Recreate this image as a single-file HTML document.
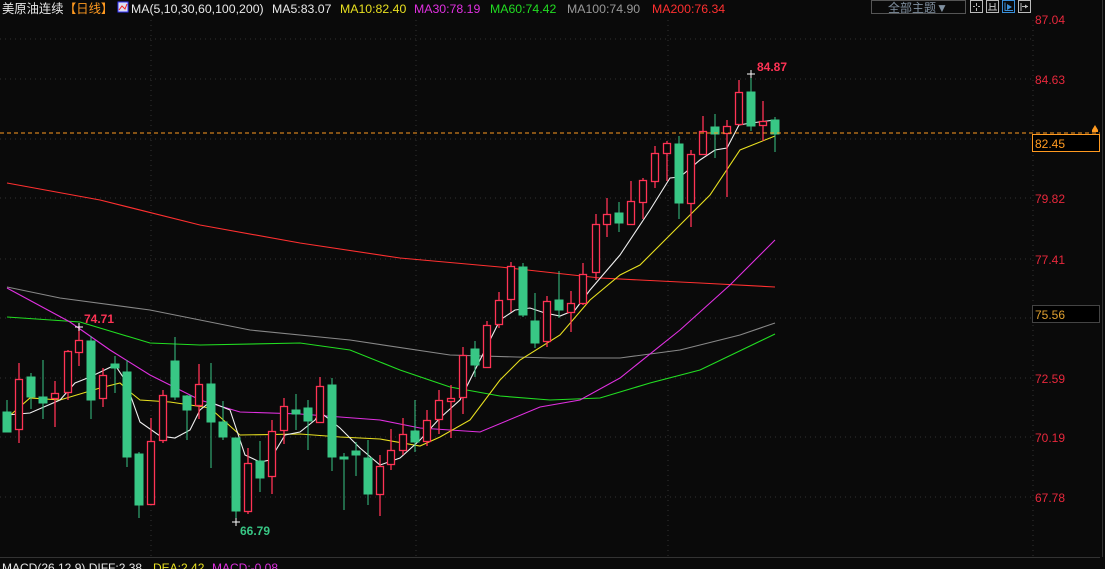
<!DOCTYPE html>
<html><head><meta charset="utf-8"><style>
html,body{margin:0;padding:0;background:#0a0a0a;width:1105px;height:569px;overflow:hidden;font-family:"Liberation Sans","Noto Sans CJK SC",sans-serif}
svg{position:absolute;left:0;top:0}
</style></head><body>
<svg width="1105" height="569" viewBox="0 0 1105 569" xmlns="http://www.w3.org/2000/svg" font-family="Liberation Sans, Noto Sans CJK SC, sans-serif">
<rect width="1105" height="569" fill="#0a0a0a"/>
<!-- grid -->
<g stroke="#333" stroke-dasharray="1,4" stroke-width="1" shape-rendering="crispEdges">
<line x1="0" y1="39" x2="1032" y2="39"/>
<line x1="0" y1="79" x2="1032" y2="79"/>
<line x1="0" y1="139" x2="1032" y2="139"/>
<line x1="0" y1="198" x2="1032" y2="198"/>
<line x1="0" y1="259" x2="1032" y2="259"/>
<line x1="0" y1="318" x2="1032" y2="318"/>
<line x1="0" y1="378" x2="1032" y2="378"/>
<line x1="0" y1="437" x2="1032" y2="437"/>
<line x1="0" y1="497" x2="1032" y2="497"/>
<line x1="151" y1="20" x2="151" y2="557"/>
<line x1="416" y1="20" x2="416" y2="557"/>
<line x1="668" y1="20" x2="668" y2="557"/>
<line x1="1033" y1="20" x2="1033" y2="557"/>
</g>
<line x1="0" y1="557.5" x2="1100" y2="557.5" stroke="#333"/>
<line x1="1102.5" y1="0" x2="1102.5" y2="557" stroke="#333"/>
<!-- MA lines -->
<g fill="none" stroke-width="1.1">
<polyline stroke="#ff3030" points="7,183 100,200 200,225 300,243 400,258 500,267 600,278 700,283 775,287"/>
<polyline stroke="#888" points="7,287 60,298 150,310 250,330 350,340 450,355 550,358 620,358 680,350 740,335 775,323"/>
<polyline stroke="#22dd22" points="7,317 80,322 150,343 200,345 300,343 350,350 400,370 450,387 500,396 550,400 600,398 650,383 700,370 775,334"/>
<polyline stroke="#e030e0" points="7,288 70,322 110,350 150,375 200,400 240,412 300,414 380,420 420,428 480,432 540,407 580,400 620,378 680,330 730,285 775,240"/>
<polyline stroke="#e8e020" points="7,418 30,398 60,400 100,388 120,383 130,392 140,400 170,402 210,408 240,435 300,434 340,437 380,439 420,446 440,437 470,420 500,380 520,360 560,335 590,300 620,275 640,265 680,225 710,195 740,150 775,136"/>
<polyline stroke="#f0f0f0" points="7,415 30,413 60,400 75,383 90,377 115,365 125,380 140,422 160,436 175,438 190,430 200,410 210,402 230,410 245,455 260,462 270,460 285,435 300,432 315,420 320,412 340,428 360,448 380,465 400,458 420,440 440,418 460,400 480,360 500,320 515,310 530,308 545,313 560,316 575,310 590,290 620,255 650,210 670,178 680,177 700,160 715,150 727,148 739,125 751,123 775,120"/>
</g>
<!-- green candles -->
<g fill="#38c785" stroke="#38c785" stroke-width="1">
<line x1="7" y1="400" x2="7" y2="432"/><rect x="3" y="412" width="8" height="20"/>
<line x1="31" y1="373" x2="31" y2="409"/><rect x="27" y="377" width="8" height="20"/>
<line x1="43" y1="360" x2="43" y2="419"/><rect x="39" y="397" width="8" height="6"/>
<line x1="91" y1="336" x2="91" y2="419"/><rect x="87" y="341" width="8" height="59"/>
<line x1="115" y1="356" x2="115" y2="393"/><rect x="111" y="364" width="8" height="4"/>
<line x1="127" y1="360" x2="127" y2="467"/><rect x="123" y="372" width="8" height="85"/>
<line x1="139" y1="452" x2="139" y2="518"/><rect x="135" y="454" width="8" height="51"/>
<line x1="175" y1="337" x2="175" y2="400"/><rect x="171" y="361" width="8" height="36"/>
<line x1="187" y1="395" x2="187" y2="440"/><rect x="183" y="396" width="8" height="14"/>
<line x1="211" y1="363" x2="211" y2="468"/><rect x="207" y="384" width="8" height="38"/>
<line x1="223" y1="401" x2="223" y2="440"/><rect x="219" y="422" width="8" height="15"/>
<line x1="236" y1="438" x2="236" y2="522"/><rect x="232" y="438" width="8" height="73"/>
<line x1="260" y1="441" x2="260" y2="492"/><rect x="256" y="461" width="8" height="17"/>
<line x1="296" y1="394" x2="296" y2="430"/><rect x="292" y="410" width="8" height="4"/>
<line x1="308" y1="400" x2="308" y2="450"/><rect x="304" y="408" width="8" height="13"/>
<line x1="332" y1="378" x2="332" y2="471"/><rect x="328" y="385" width="8" height="72"/>
<line x1="344" y1="453" x2="344" y2="510"/><rect x="340" y="457" width="8" height="2"/>
<line x1="356" y1="442" x2="356" y2="476"/><rect x="352" y="451" width="8" height="4"/>
<line x1="368" y1="440" x2="368" y2="505"/><rect x="364" y="458" width="8" height="36"/>
<line x1="415" y1="400" x2="415" y2="452"/><rect x="411" y="431" width="8" height="11"/>
<line x1="475" y1="341" x2="475" y2="377"/><rect x="471" y="349" width="8" height="16"/>
<line x1="523" y1="263" x2="523" y2="317"/><rect x="519" y="267" width="8" height="48"/>
<line x1="535" y1="293" x2="535" y2="348"/><rect x="531" y="321" width="8" height="22"/>
<line x1="559" y1="271" x2="559" y2="318"/><rect x="555" y="300" width="8" height="10"/>
<line x1="619" y1="202" x2="619" y2="232"/><rect x="615" y="213" width="8" height="10"/>
<line x1="679" y1="136" x2="679" y2="219"/><rect x="675" y="144" width="8" height="59"/>
<line x1="715" y1="114" x2="715" y2="158"/><rect x="711" y="127" width="8" height="7"/>
<line x1="751" y1="74" x2="751" y2="131"/><rect x="747" y="92" width="8" height="34"/>
<line x1="775" y1="117" x2="775" y2="152"/><rect x="771" y="120" width="8" height="14"/>
</g>
<!-- red candles -->
<g fill="#0a0a0a" stroke="#ff3355" stroke-width="1.3">
<line x1="19" y1="363" x2="19" y2="443"/><rect x="15.5" y="379.5" width="7" height="50"/>
<line x1="55" y1="381" x2="55" y2="427"/><rect x="51.5" y="393.5" width="7" height="5"/>
<line x1="68" y1="350" x2="68" y2="400"/><rect x="64.5" y="351.5" width="7" height="41"/>
<line x1="79" y1="327" x2="79" y2="366"/><rect x="75.5" y="340.5" width="7" height="12"/>
<line x1="103" y1="368" x2="103" y2="407"/><rect x="99.5" y="375.5" width="7" height="23"/>
<line x1="151" y1="418" x2="151" y2="505"/><rect x="147.5" y="441.5" width="7" height="63"/>
<line x1="163" y1="390" x2="163" y2="443"/><rect x="159.5" y="395.5" width="7" height="45"/>
<line x1="199" y1="364" x2="199" y2="419"/><rect x="195.5" y="384.5" width="7" height="21"/>
<line x1="248" y1="448" x2="248" y2="514"/><rect x="244.5" y="463.5" width="7" height="48"/>
<line x1="272" y1="420" x2="272" y2="494"/><rect x="268.5" y="431.5" width="7" height="45"/>
<line x1="284" y1="398" x2="284" y2="444"/><rect x="280.5" y="406.5" width="7" height="24"/>
<line x1="320" y1="377" x2="320" y2="423"/><rect x="316.5" y="386.5" width="7" height="36"/>
<line x1="380" y1="455" x2="380" y2="516"/><rect x="376.5" y="466.5" width="7" height="28"/>
<line x1="391" y1="429" x2="391" y2="470"/><rect x="387.5" y="450.5" width="7" height="14"/>
<line x1="403" y1="418" x2="403" y2="455"/><rect x="399.5" y="434.5" width="7" height="16"/>
<line x1="427" y1="410" x2="427" y2="446"/><rect x="423.5" y="420.5" width="7" height="21"/>
<line x1="439" y1="390" x2="439" y2="434"/><rect x="435.5" y="400.5" width="7" height="19"/>
<line x1="451" y1="385" x2="451" y2="438"/><rect x="447.5" y="398.5" width="7" height="3"/>
<line x1="463" y1="347" x2="463" y2="414"/><rect x="459.5" y="355.5" width="7" height="42"/>
<line x1="487" y1="321" x2="487" y2="367"/><rect x="483.5" y="325.5" width="7" height="42"/>
<line x1="499" y1="292" x2="499" y2="328"/><rect x="495.5" y="300.5" width="7" height="24"/>
<line x1="511" y1="262" x2="511" y2="312"/><rect x="507.5" y="266.5" width="7" height="33"/>
<line x1="547" y1="296" x2="547" y2="347"/><rect x="543.5" y="301.5" width="7" height="40"/>
<line x1="571" y1="291" x2="571" y2="332"/><rect x="567.5" y="303.5" width="7" height="9"/>
<line x1="583" y1="263" x2="583" y2="305"/><rect x="579.5" y="274.5" width="7" height="29"/>
<line x1="596" y1="214" x2="596" y2="280"/><rect x="592.5" y="224.5" width="7" height="48"/>
<line x1="607" y1="198" x2="607" y2="237"/><rect x="603.5" y="214.5" width="7" height="10"/>
<line x1="631" y1="181" x2="631" y2="224"/><rect x="627.5" y="201.5" width="7" height="23"/>
<line x1="643" y1="178" x2="643" y2="219"/><rect x="639.5" y="180.5" width="7" height="22"/>
<line x1="655" y1="146" x2="655" y2="188"/><rect x="651.5" y="153.5" width="7" height="28"/>
<line x1="667" y1="141" x2="667" y2="181"/><rect x="663.5" y="143.5" width="7" height="10"/>
<line x1="691" y1="150" x2="691" y2="227"/><rect x="687.5" y="154.5" width="7" height="49"/>
<line x1="703" y1="116" x2="703" y2="154"/><rect x="699.5" y="131.5" width="7" height="23"/>
<line x1="727" y1="120" x2="727" y2="197"/><rect x="723.5" y="126.5" width="7" height="7"/>
<line x1="739" y1="80" x2="739" y2="124"/><rect x="735.5" y="92.5" width="7" height="32"/>
<line x1="763" y1="101" x2="763" y2="141"/><rect x="759.5" y="121.5" width="7" height="4"/>
</g>
<!-- current price dashed -->
<line x1="0" y1="133" x2="1100" y2="133" stroke="#ff9a20" stroke-width="1.2" stroke-dasharray="4,3" shape-rendering="crispEdges"/>
<!-- markers -->
<g stroke="#fff" stroke-width="1"><line x1="747" y1="74" x2="755" y2="74"/><line x1="751" y1="70" x2="751" y2="78"/>
<line x1="75" y1="327" x2="83" y2="327"/><line x1="79" y1="323" x2="79" y2="331"/>
<line x1="232" y1="522" x2="240" y2="522"/><line x1="236" y1="518" x2="236" y2="526"/></g>
<g font-size="12" font-weight="bold">
<text x="757" y="71" fill="#ff3355">84.87</text>
<text x="84" y="323" fill="#ff3355">74.71</text>
<text x="240" y="535" fill="#38c785">66.79</text>
</g>
<!-- axis -->
<g font-size="12" fill="#e8283c">
<text x="1035" y="24">87.04</text>
<text x="1035" y="84">84.63</text>
<text x="1035" y="203">79.82</text>
<text x="1035" y="264">77.41</text>
<text x="1035" y="383">72.59</text>
<text x="1035" y="442">70.19</text>
<text x="1035" y="502">67.78</text>
</g>
<rect x="1032.5" y="134.5" width="67" height="17" fill="#000" stroke="#ff9a20"/>
<text x="1035" y="148" font-size="12" fill="#ff9a20">82.45</text>
<rect x="1032.5" y="305.5" width="67" height="17" fill="#000" stroke="#444"/>
<text x="1035" y="319" font-size="12" fill="#e0a030">75.56</text>
<polygon points="1092,130 1095,125 1098,130" fill="#ff9a20"/><rect x="1092" y="130" width="6" height="2" fill="#ff9a20"/>
<!-- header -->
<g font-size="12.3">
<text x="2" y="13" fill="#e8e8e8">美原油连续</text>
<text x="64" y="13" fill="#ff9a20">【日线】</text>
<rect x="118" y="2" width="10" height="10" fill="#dde" stroke="#33f"/>
<polyline points="119,10 122,6 125,9 127,4" stroke="#e22" fill="none"/>
<text x="131" y="13" fill="#e8e8e8">MA(5,10,30,60,100,200)</text>
<text x="272" y="13" fill="#e8e8e8">MA5:83.07</text>
<text x="340" y="13" fill="#e8e020">MA10:82.40</text>
<text x="414" y="13" fill="#e030e0">MA30:78.19</text>
<text x="490" y="13" fill="#22dd22">MA60:74.42</text>
<text x="567" y="13" fill="#999">MA100:74.90</text>
<text x="652" y="13" fill="#ff3030">MA200:76.34</text>
</g>
<rect x="871.5" y="0.5" width="94" height="13" fill="#0a0a0a" stroke="#555"/>
<text x="888" y="12" font-size="12" fill="#8090a0">全部主题▼</text>
<g fill="none" stroke="#bbb">
<rect x="970.5" y="0.5" width="12" height="12"/><rect x="986.5" y="0.5" width="12" height="12"/>
<rect x="1002.5" y="0.5" width="12" height="12" stroke="#3a8fd8"/><rect x="1018.5" y="0.5" width="12" height="12"/>
<path d="M976.5 3v3M976.5 8v3M973 6.5h2M978 6.5h2"/>
<path d="M990 3v7M995 3v7M990 6.5h5M988 10h9"/>
<path d="M1005 2.5v8h8" stroke="#3a8fd8"/><polygon points="1007,4 1012,7 1007,10" fill="#3a8fd8" stroke="none"/>
<path d="M1021 3v8M1022 6.5h6"/><polygon points="1025,4.5 1028,6.5 1025,8.5" fill="#bbb" stroke="none"/>
</g>
<!-- macd line -->
<text x="2" y="572" font-size="12" fill="#e8e8e8">MACD(26,12,9) DIFF:2.38</text>
<text x="153" y="572" font-size="12" fill="#e8e020">DEA:2.42</text>
<text x="212" y="572" font-size="12" fill="#e030e0">MACD:-0.08</text>
</svg>
</body></html>
